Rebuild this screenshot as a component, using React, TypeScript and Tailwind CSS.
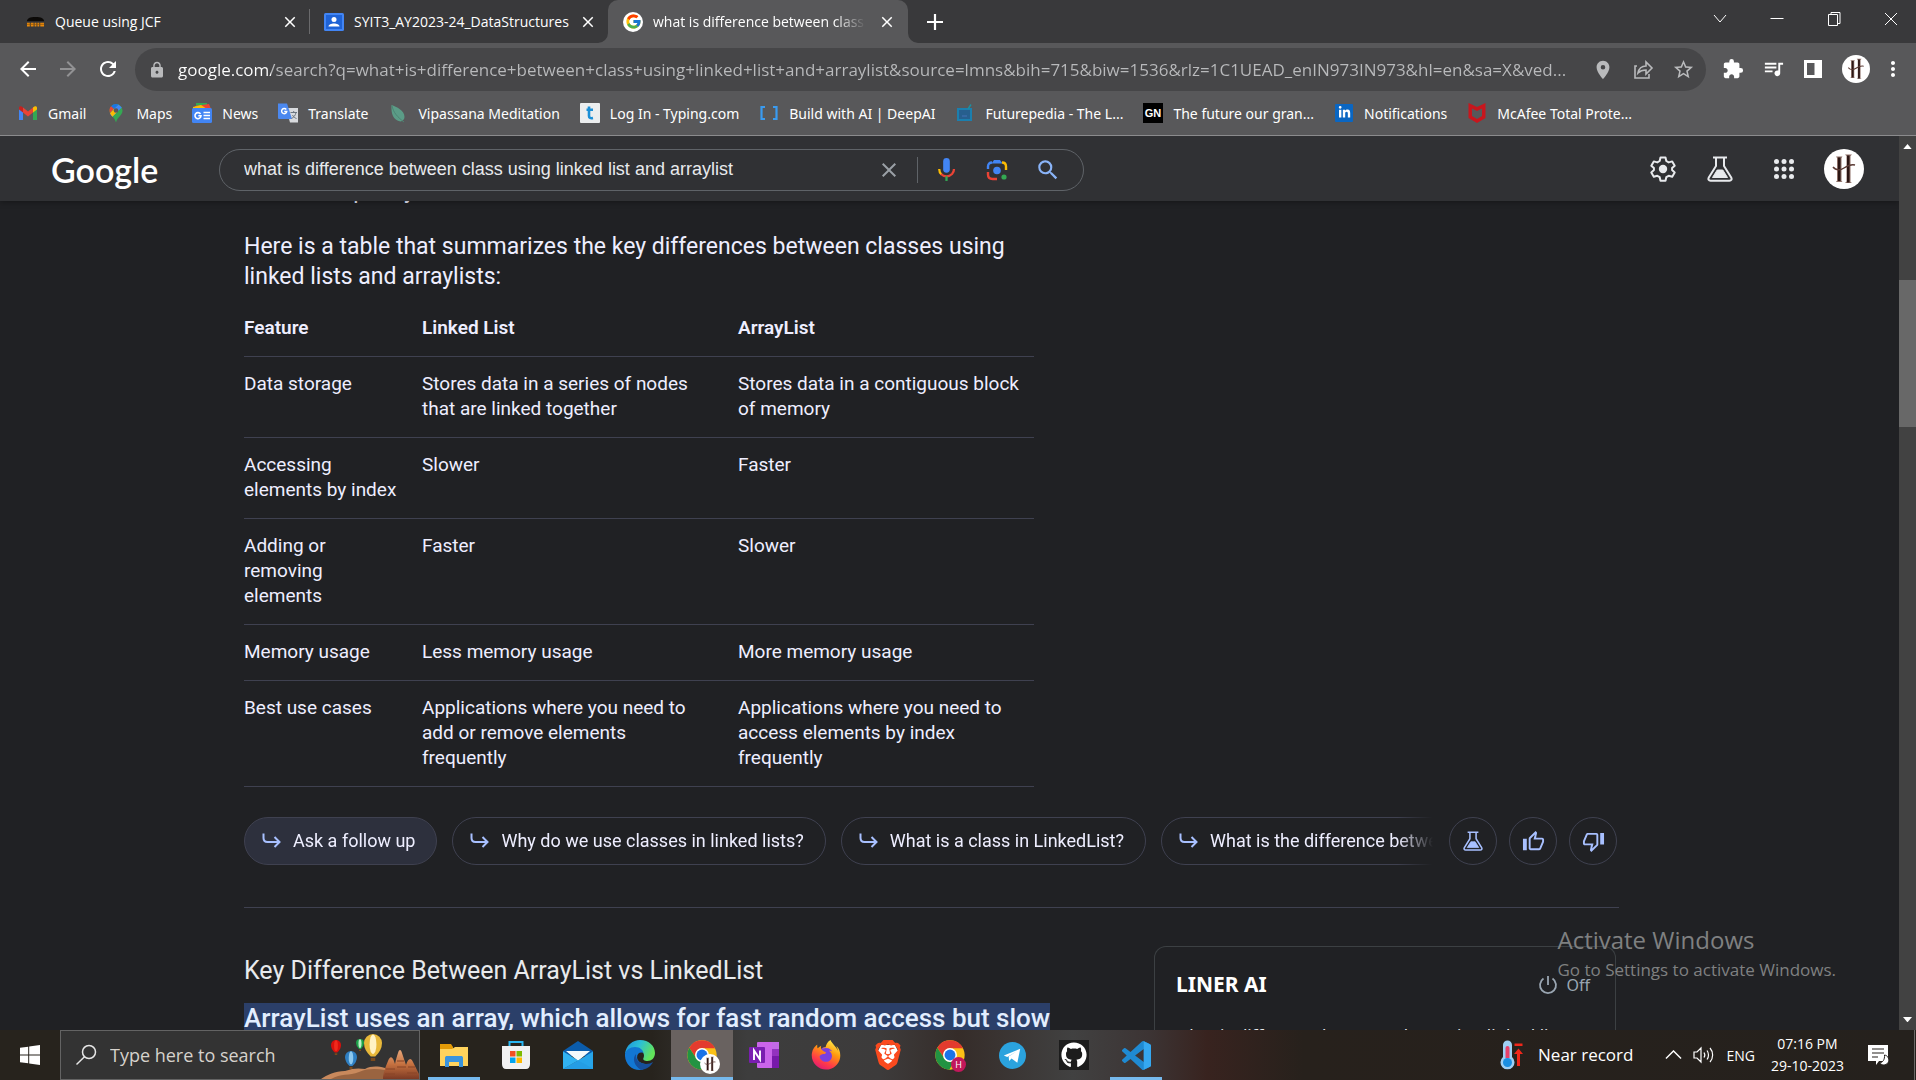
import React, { ReactNode } from "react";
import { FcGoogle } from "react-icons/fc";
import { FaFirefoxBrowser, FaGithub, FaLinkedinIn } from "react-icons/fa";
import { SiBrave } from "react-icons/si";
import {
  MdArrowBack,
  MdArrowForward,
  MdClose,
  MdExtension,
  MdLocationOn,
  MdLock,
  MdMoreVert,
  MdOutlineThumbDown,
  MdOutlineThumbUp,
  MdQueueMusic,
  MdRefresh,
  MdSearch,
  MdStarBorder,
} from "react-icons/md";

/* ---------- shared drawings ---------- */

function Avatar({ className }: { className: string }) {
  return (
    <svg viewBox="0 0 40 40" className={className} aria-hidden="true">
      <circle cx="20" cy="20" r="20" fill="#fff" />
      <path d="M12 7.500h6.500l-1 1.500v23l1 1H12l1-1.500V9z" fill="#8d7068" />
      <path d="M14 8.500h2.500v23.500H14z" fill="#2b1614" />
      <path d="M21 5.500h7l-1.500 1.500v26l1.500 1h-7l1.500-1.500V7z" fill="#8d7068" />
      <path d="M23 6.500h2.500v27H23z" fill="#2b1614" />
      <path d="M9 18c3 4 8 3 11 1s7-4 11-3" fill="none" stroke="#5a3a34" strokeWidth="1.500" />
    </svg>
  );
}

function Flask({ className }: { className: string }) {
  return (
    <svg viewBox="0 0 26 26" className={className} fill="none" stroke="currentColor" strokeWidth="2" aria-hidden="true">
      <path d="M6 1.500h14M9 1.500v8.500L1.800 21.500c-1 1.800 0 3.300 1.700 3.300h19c1.700 0 2.700-1.500 1.700-3.300L17 10V1.500" />
      <path d="M10.200 14h5.600l4.700 7.500h-15z" fill="currentColor" strokeWidth="1" />
    </svg>
  );
}

function Chrome({ className }: { className: string }) {
  return (
    <svg viewBox="0 0 24 24" className={className} aria-hidden="true">
      <circle cx="12" cy="12" r="11" fill="#fbc116" />
      <path d="M2.470 6.500A11 11 0 0 1 21.800 7H12a5 5 0 0 0-4.330 7.500Z" fill="#e33b2e" />
      <path d="M2.470 6.500A11 11 0 0 0 11.500 23L16.330 14.500a5 5 0 0 1-8.660 0Z" fill="#229342" />
      <circle cx="12" cy="12" r="5.200" fill="#fff" />
      <circle cx="12" cy="12" r="4.100" fill="#1a73e8" />
    </svg>
  );
}

/* ---------- browser tabs ---------- */

function TabFlare({ side }: { side: "left" | "right" }) {
  return (
    <svg
      viewBox="0 0 10 10"
      className={
        side === "left"
          ? "absolute -left-[10px] bottom-0 h-[10px] w-[10px] text-[#58585a]"
          : "absolute -right-[10px] bottom-0 h-[10px] w-[10px] text-[#58585a]"
      }
      fill="currentColor"
      aria-hidden="true"
    >
      <path d={side === "left" ? "M10 0v10H0A10 10 0 0 0 10 0Z" : "M0 0v10h10A10 10 0 0 1 0 0Z"} />
    </svg>
  );
}

function TabStrip() {
  return (
    <div className="flex h-[43px] shrink-0 items-center bg-[#39393b] text-[14px]">
      <div className="flex w-[309px] items-center pl-[26px] pr-[10px]">
        <svg viewBox="0 0 20 12" className="w-[19px] shrink-0" aria-hidden="true">
          <path d="M1 5.500c0-3 3-4.500 9-4.500s9 1.500 9 4.500z" fill="#0c0a08" />
          <path d="M1 7h3v4H1zm4 0h3v4H5zm4 0h2v4H9zm3 0h2v4h-2zm3 0h4v4h-4z" fill="#e8890c" />
          <path d="M1 8.800h18" stroke="#8a5206" strokeWidth=".7" />
        </svg>
        <span className="ml-[10px] flex-1 truncate">Queue using JCF</span>
        <button aria-label="Close tab"><MdClose className="size-[18px]" /></button>
      </div>
      <div className="h-[25px] w-px bg-[#6a6a6c]" />
      <div className="flex w-[298px] items-center pl-[14px] pr-[11px]">
        <svg viewBox="0 0 20 20" className="size-5 shrink-0" aria-hidden="true">
          <rect y="1" width="20" height="18" rx="1.500" fill="#4285f4" />
          <rect x="2" y="3" width="16" height="14" fill="#1f63d6" />
          <circle cx="10" cy="7.500" r="2.500" fill="#fff" />
          <path d="M4.500 14.500c0-4 11-4 11 0z" fill="#fff" />
        </svg>
        <span className="ml-[10px] flex-1 truncate">SYIT3_AY2023-24_DataStructures</span>
        <button aria-label="Close tab"><MdClose className="size-[18px]" /></button>
      </div>
      <div className="relative flex h-full w-[300px] items-center rounded-t-[10px] bg-[#58585a] pl-[15px] pr-[12px]">
        <TabFlare side="left" />
        <TabFlare side="right" />
        <span className="flex size-5 shrink-0 items-center justify-center rounded-full bg-white">
          <FcGoogle className="size-[17px]" />
        </span>
        <span className="ml-[10px] mr-[12px] flex-1 overflow-hidden whitespace-nowrap [mask-image:linear-gradient(90deg,#000_85%,transparent)]">
          what is difference between class
        </span>
        <button aria-label="Close tab"><MdClose className="size-[18px]" /></button>
      </div>
      <button aria-label="New tab" className="ml-[18px]">
        <svg viewBox="0 0 18 18" className="size-[18px]" stroke="#fff" strokeWidth="2.200" aria-hidden="true">
          <path d="M9 1v16M1 9h16" />
        </svg>
      </button>
      <div className="-mr-[3px] ml-auto flex h-[37px] items-center self-start text-white">
        {[
          ["Search tabs", "M4 6l6 7 6-7"],
          ["Minimize", "M3.500 9.500h13"],
          ["Restore", "M4.500 5.500h9v11h-9zM7 5.500v-2h9v11h-2.500"],
          ["Close", "M4 4l12 12M16 4L4 16"],
        ].map(([label, d]) => (
          <button key={label} aria-label={label} className="flex w-[57px] items-center justify-center">
            <svg viewBox="0 0 20 20" className="size-5" fill="none" stroke="currentColor" aria-hidden="true">
              <path d={d} />
            </svg>
          </button>
        ))}
      </div>
    </div>
  );
}

/* ---------- address bar ---------- */

function Toolbar() {
  return (
    <div className="flex shrink-0 items-center bg-[#58585a] pt-[5px]">
      <div className="flex w-[135px] items-center gap-4 pl-4 pb-[2px]">
        <button aria-label="Back"><MdArrowBack className="size-6" /></button>
        <button aria-label="Forward" className="text-[#929294]"><MdArrowForward className="size-6" /></button>
        <button aria-label="Reload"><MdRefresh className="size-6" /></button>
      </div>
      <div className="flex h-[43px] flex-1 items-center rounded-full bg-[#464648] pl-[13px] pr-[11px] text-[#b9babc]">
        <MdLock className="size-[18px] shrink-0" />
        <input
          aria-label="Address"
          className="ml-[12px] min-w-0 flex-1 bg-[linear-gradient(90deg,#fff_93px,#b9babc_93px)] bg-clip-text text-[17px] text-transparent outline-none"
          defaultValue="google.com/search?q=what+is+difference+between+class+using+linked+list+and+arraylist&source=lmns&bih=715&biw=1536&rlz=1C1UEAD_enIN973IN973&hl=en&sa=X&ved..."
        />
        <div className="ml-3 flex items-center gap-[18px]">
          <button aria-label="Location"><MdLocationOn className="size-[22px]" /></button>
          <button aria-label="Share">
            <svg viewBox="0 0 22 22" className="size-[22px]" fill="none" stroke="currentColor" strokeWidth="1.600" aria-hidden="true">
              <path d="M5 7H3v12h14v-4" />
              <path d="M6 14c1-5 4-7 8-7V3l6 6-6 6v-4c-4 0-6 1-8 3z" />
            </svg>
          </button>
          <button aria-label="Bookmark"><MdStarBorder className="size-[23px]" /></button>
        </div>
      </div>
      <div className="flex items-center pl-4 pr-[11px] pb-[2px]">
        <button aria-label="Extensions" className="w-10"><MdExtension className="size-[22px]" /></button>
        <button aria-label="Media" className="w-10"><MdQueueMusic className="size-[23px]" /></button>
        <button aria-label="Side panel" className="w-10">
          <svg viewBox="0 0 22 22" className="size-[22px]" aria-hidden="true">
            <path d="M2 2h18v18H2zM5 5v12h7.500V5z" fill="#fff" fillRule="evenodd" />
          </svg>
        </button>
        <button aria-label="Profile" className="w-[39px]"><Avatar className="size-7" /></button>
        <button aria-label="Menu"><MdMoreVert className="size-6" /></button>
      </div>
    </div>
  );
}

/* ---------- bookmarks ---------- */

const bookmarks: { label: string; icon: ReactNode }[] = [
  {
    label: "Gmail",
    icon: (
      <>
        <path d="M1 5v12h4V8z" fill="#4285f4" />
        <path d="M19 5v12h-4V8z" fill="#34a853" />
        <path d="M5 4.500l5 4 5-4v5l-5 4-5-4z" fill="#ea4335" />
        <path d="M1 5c0-2 2-2.500 4-.500v5L1 6.500z" fill="#c5221f" />
        <path d="M19 5c0-2-2-2.500-4-.500v5l4-3z" fill="#fbbc04" />
      </>
    ),
  },
  {
    label: "Maps",
    icon: (
      <>
        <path d="M10 1a6.500 6.500 0 0 0-6.500 6.500c0 5 4.500 5.500 6.500 12 2-6.500 6.500-7 6.500-12A6.500 6.500 0 0 0 10 1z" fill="#34a853" />
        <path d="M10 1a6.500 6.500 0 0 0-5 2.300L8 6l4.500-4.500A7 7 0 0 0 10 1z" fill="#1a73e8" />
        <path d="M5 3.300A6.500 6.500 0 0 0 4 10l4-4z" fill="#ea4335" />
        <path d="M4 10.500c.6 1.200 1.500 2.200 2.400 3.300L15.800 4.500 12.500 1.500 8 6z" fill="#4285f4" />
        <path d="M4 10.300c.6 1.200 1.500 2.200 2.400 3.500L12 8l-4-2z" fill="#fbbc04" />
        <circle cx="10" cy="7.500" r="2.300" fill="#58585a" />
      </>
    ),
  },
  {
    label: "News",
    icon: (
      <>
        <path d="M4 0h11v8H4z" fill="#34a853" />
        <path d="M3 3l14-2 2 5H3z" fill="#ea4335" />
        <path d="M1 4l8-2 6 4H1z" fill="#fbbc04" />
        <rect y="5" width="20" height="15" rx="1.500" fill="#4285f4" />
        <path d="M8.500 11A3 3 0 1 0 9 12.800H6.300M11.500 9.500H18M11.500 12.500H18M11.500 15.500H18" fill="none" stroke="#fff" strokeWidth="1.600" />
      </>
    ),
  },
  {
    label: "Translate",
    icon: (
      <>
        <path d="M8 5h12v14.500H12z" fill="#d8dade" />
        <path d="M0 .5h9L14 16H1.500C.5 16 0 15.500 0 14.500z" fill="#4b88ef" />
        <path d="M8.300 6.500A2.600 2.600 0 1 0 8.800 8.500H6.200" fill="none" stroke="#fff" strokeWidth="1.400" />
        <path d="M12.500 9.500H19M15.700 8v1.500M18 9.500c-.5 3-2.500 5-4.500 6M14.500 12c1 2 2.500 3 4 3.500" fill="none" stroke="#6b7580" />
      </>
    ),
  },
  {
    label: "Vipassana Meditation",
    icon: (
      <>
        <path d="M3.500 2c5 2 13 5 13 12 0 2.500-2 4-4 4.500C5 17 3 11 3.500 2z" fill="#5b9c87" />
        <path d="M4 2.500c1 7 6 12 12 16.500" fill="none" stroke="#4c8573" strokeWidth="1" />
      </>
    ),
  },
  {
    label: "Log In - Typing.com",
    icon: (
      <>
        <rect width="20" height="20" rx="1" fill="#eceeef" />
        <path d="M9 3.500v9.500c0 2 1.500 2.500 4 2M6.500 6.800h6.500" fill="none" stroke="#1b8fd6" strokeWidth="2.600" />
      </>
    ),
  },
  {
    label: "Build with AI | DeepAI",
    icon: (
      <path d="M6 4H2.500v12H6M14 4h3.500v12H14" fill="none" stroke="#3a9bf0" strokeWidth="2.200" />
    ),
  },
  {
    label: "Futurepedia - The L...",
    icon: (
      <>
        <path d="M3 6h13v11H3z" fill="#275f8e" stroke="#1b7fae" strokeWidth="2" />
        <path d="M13 6l3-4.500" stroke="#1c8f9f" strokeWidth="1.500" />
        <path d="M7 13h5" stroke="#3b6ba8" strokeWidth="1.500" />
      </>
    ),
  },
  {
    label: "The future our gran...",
    icon: (
      <>
        <rect width="20" height="20" fill="#000" />
        <text x="10" y="14" fontSize="11" fontWeight="700" fill="#fff" textAnchor="middle" fontFamily="Liberation Sans, sans-serif">
          GN
        </text>
      </>
    ),
  },
  {
    label: "Notifications",
    icon: (
      <>
        <rect x="1" y="1" width="18" height="18" rx="1" fill="#0a66c2" />
        <FaLinkedinIn x="4" y="3" size={13} color="#fff" />
      </>
    ),
  },
  {
    label: "McAfee Total Prote...",
    icon: (
      <path d="M1.500 0L10 4l8.500-4v15L10 20l-8.500-5zM5 5.500v7.500l5 3 5-3V5.500L10 8z" fill="#c8161d" fillRule="evenodd" />
    ),
  },
];

function BookmarksBar() {
  return (
    <nav
      aria-label="Bookmarks"
      className="flex h-[45px] shrink-0 items-center gap-5 border-b border-[#8b8b8d] bg-[#58585a] pl-[18px] font-['Noto_Sans','Open_Sans',sans-serif]"
    >
      {bookmarks.map((b) => (
        <a key={b.label} href="#" className="flex items-center gap-[10px] whitespace-nowrap text-[14px]">
          <svg viewBox="0 0 20 20" className="size-5" aria-hidden="true">{b.icon}</svg>
          {b.label}
        </a>
      ))}
    </nav>
  );
}

/* ---------- search page ---------- */

function SearchHeader() {
  return (
    <header className="relative z-10 flex h-[65px] shrink-0 items-center bg-[#303134] pt-[2px] pr-[35px] shadow-[0_1px_6px_rgba(0,0,0,0.35)]">
      <a href="#" className="w-[219px] pl-[51px] font-['Lato',sans-serif] text-[34px] leading-[42px] font-semibold text-white">
        Google
      </a>
      <div className="flex h-[42px] w-[865px] items-center rounded-full border border-[#5f6368] pl-6 pr-[22px]">
        <input
          aria-label="Search"
          className="min-w-0 flex-1 font-['Liberation_Sans',Arial,sans-serif] text-[18px] text-[#e8eaed] outline-none"
          defaultValue="what is difference between class using linked list and arraylist"
        />
        <button aria-label="Clear" className="text-[#9aa0a6]"><MdClose className="size-6" /></button>
        <div className="mx-4 h-[26px] w-px bg-[#5f6368]" />
        <div className="flex items-center gap-[26px]">
          <button aria-label="Search by voice">
            <svg viewBox="0 0 24 24" className="size-[25px]" fill="none" aria-hidden="true">
              <rect x="8.800" y="1" width="6.400" height="14" rx="3.200" fill="#4285f4" />
              <path d="M5 11.500c0 2.200.8 4 2.200 5.200" stroke="#fbbc04" strokeWidth="2.200" />
              <path d="M6.700 16.300c3 3 7.600 3 10.600 0a7 7 0 0 0 1.900-4.800" stroke="#ea4335" strokeWidth="2.200" />
              <path d="M12 18.500V23" stroke="#34a853" strokeWidth="2.200" />
            </svg>
          </button>
          <button aria-label="Search by image">
            <svg viewBox="0 0 24 24" className="size-6" fill="none" strokeWidth="2.400" aria-hidden="true">
              <path d="M3 11V8.500C3 6 4.500 4.500 7 4.500" stroke="#4285f4" />
              <path d="M6.500 5.500L9 2h6l2.500 3.500z" fill="#4285f4" />
              <path d="M17 4.500c2.500 0 4 1.500 4 4V12" stroke="#fbbc04" />
              <path d="M3 14v2.500C3 19.500 4.500 21 7.500 21H12" stroke="#ea4335" />
              <circle cx="12" cy="12.500" r="3.800" fill="#4285f4" />
              <circle cx="19" cy="19" r="2.600" fill="#34a853" />
            </svg>
          </button>
          <button aria-label="Search" className="text-[#8ab4f8]"><MdSearch className="size-[26px]" /></button>
        </div>
      </div>
      <div className="ml-auto flex items-center pb-[2px] text-[#e8eaed]">
        <button aria-label="Settings" className="mr-[31px]">
          <svg viewBox="0 0 26 26" className="size-[26px]" fill="none" stroke="currentColor" strokeWidth="2" strokeLinejoin="round" aria-hidden="true">
            <path d="M10.500 1.500h5l.8 3.500 2.400 1.400 3.500-1 2.500 4.300-2.600 2.400v2l2.600 2.400-2.500 4.300-3.500-1-2.400 1.400-.8 3.500h-5l-.8-3.500-2.400-1.400-3.500 1-2.500-4.300 2.600-2.400v-2L1.300 9.700l2.500-4.300 3.500 1L9.700 5z" />
            <circle cx="13" cy="13" r="4.200" fill="currentColor" stroke="none" />
          </svg>
        </button>
        <button aria-label="Labs" className="mr-[41px]"><Flask className="size-[26px]" /></button>
        <button aria-label="Apps" className="mr-[30px]">
          <svg viewBox="0 0 20 20" className="size-5" fill="currentColor" aria-hidden="true">
            {[2.5, 10, 17.5].map((y) =>
              [2.5, 10, 17.5].map((x) => <circle key={x + "-" + y} cx={x} cy={y} r="2.500" />)
            )}
          </svg>
        </button>
        <button aria-label="Account"><Avatar className="size-10" /></button>
      </div>
    </header>
  );
}

const rows = [
  ["Data storage", "Stores data in a series of nodes that are linked together", "Stores data in a contiguous block of memory"],
  ["Accessing elements by index", "Slower", "Faster"],
  ["Adding or removing elements", "Faster", "Slower"],
  ["Memory usage", "Less memory usage", "More memory usage"],
  [
    "Best use cases",
    "Applications where you need to add or remove elements frequently",
    "Applications where you need to access elements by index frequently",
  ],
];

function ComparisonTable() {
  return (
    <table className="mt-[9px] w-[790px] table-fixed text-left align-top text-[19px] leading-[25px]">
      <colgroup>
        <col className="w-[178px]" />
        <col className="w-[316px]" />
        <col />
      </colgroup>
      <thead>
        <tr className="border-b border-[#3f4150]">
          {["Feature", "Linked List", "ArrayList"].map((h) => (
            <th key={h} scope="col" className="pt-[14px] pr-6 pb-4 font-semibold">{h}</th>
          ))}
        </tr>
      </thead>
      <tbody>
        {rows.map((r) => (
          <tr key={r[0]} className="border-b border-[#3f4150]">
            <td className="pt-[14px] pr-6 pb-4 align-top">{r[0]}</td>
            <td className="pt-[14px] pr-10 pb-4 align-top">{r[1]}</td>
            <td className="pt-[14px] pr-3 pb-4 align-top">{r[2]}</td>
          </tr>
        ))}
      </tbody>
    </table>
  );
}

function FollowUp({ label, primary }: { label: string; primary?: boolean }) {
  return (
    <button
      className={
        primary
          ? "flex h-12 shrink-0 items-center gap-3 rounded-full border border-[#3f4150] bg-[#2d303d] pb-[2px] pl-4 pr-[21px]"
          : "flex h-12 shrink-0 items-center gap-3 rounded-full border border-[#3f4150] pb-[2px] pl-4 pr-[21px]"
      }
    >
      <svg viewBox="0 0 20 20" className="size-5 text-[#a8c0ff]" fill="none" stroke="currentColor" strokeWidth="2" aria-hidden="true">
        <path d="M2.500 3.500V8c0 2.500 1.500 4 4 4H18M13.500 7l5 5-5 5" />
      </svg>
      {label}
    </button>
  );
}

function FollowUpRow() {
  return (
    <div className="mt-[30px] flex w-[1373px] text-[18px] text-[#eeeeff]">
      <div className="flex min-w-0 flex-1 gap-[15px] overflow-hidden whitespace-nowrap [mask-image:linear-gradient(90deg,#000_97%,transparent)]">
        <FollowUp label="Ask a follow up" primary />
        <FollowUp label="Why do we use classes in linked lists?" />
        <FollowUp label="What is a class in LinkedList?" />
        <FollowUp label="What is the difference between ArrayList and LinkedList?" />
      </div>
      <div className="ml-4 flex gap-3 text-[#a8c0ff]">
        <button aria-label="Labs" className="flex size-12 items-center justify-center rounded-full border border-[#3f4150]">
          <Flask className="size-5" />
        </button>
        <button aria-label="Helpful" className="flex size-12 items-center justify-center rounded-full border border-[#3f4150]">
          <MdOutlineThumbUp className="size-[23px]" />
        </button>
        <button aria-label="Not helpful" className="flex size-12 items-center justify-center rounded-full border border-[#3f4150]">
          <MdOutlineThumbDown className="size-[23px]" />
        </button>
      </div>
    </div>
  );
}

function LinerCard() {
  return (
    <aside className="mt-[38px] w-[462px] rounded-t-xl border border-b-0 border-[#3c4043] px-[21px] pt-6 font-['Noto_Sans','Open_Sans',sans-serif]">
      <div className="flex h-7 items-center">
        <h2 className="flex-1 text-[21px] font-bold text-white">LINER AI</h2>
        <button className="mr-1 flex items-center gap-2 text-[16px] text-[#9aa6b2]">
          <svg viewBox="0 0 20 20" className="size-5" fill="none" stroke="currentColor" strokeWidth="1.800" aria-hidden="true">
            <path d="M10 1v9M5.500 3.500a8 8 0 1 0 9 0" />
          </svg>
          Off
        </button>
      </div>
      <p className="mt-6 text-[17px] leading-6 text-[#e8eaed]">
        what is difference between class using linked list and arraylist
      </p>
    </aside>
  );
}

function Results() {
  return (
    <main className="-mt-[25px] min-w-0 flex-1 overflow-hidden pl-[244px] font-['Roboto',sans-serif] text-[#eeeeff]">
      <ul className="list-disc pl-[26px] text-[23px] leading-[30px]">
        <li>more capacity</li>
      </ul>
      <p className="mt-[26px] w-[790px] text-[23px] leading-[30px]">
        Here is a table that summarizes the key differences between classes using linked lists and arraylists:
      </p>
      <ComparisonTable />
      <FollowUpRow />
      <hr className="mt-[42px] w-[1375px] border-[#3f4150]" />
      <div className="flex w-[1375px] gap-[102px]">
        <article className="w-[808px] pt-[46px]">
          <h3 className="text-[25px] leading-[34px] text-[#e8eaed]">
            <a href="#">Key Difference Between ArrayList vs LinkedList</a>
          </h3>
          <p className="mt-[14px] text-[26px] leading-8 font-medium whitespace-nowrap text-[#e2eeff]">
            <mark className="bg-[#2b3f69] text-inherit">
              ArrayList uses an array, which allows for fast random access but slow
            </mark>
          </p>
        </article>
        <LinerCard />
      </div>
    </main>
  );
}

function Scrollbar() {
  return (
    <div className="flex w-[17px] shrink-0 flex-col items-center bg-[#424242] py-2">
      <svg viewBox="0 0 10 6" className="w-[9px]" fill="#fff" aria-hidden="true"><path d="M5 0l5 6H0z" /></svg>
      <div className="mt-[131px] h-[147px] w-full bg-[#686868]" />
      <svg viewBox="0 0 10 6" className="mt-auto w-[9px]" fill="#fff" aria-hidden="true"><path d="M0 0h10L5 6z" /></svg>
    </div>
  );
}

/* ---------- taskbar ---------- */

const apps: { name: string; active?: boolean; open?: boolean; icon: ReactNode }[] = [
  {
    name: "File Explorer",
    open: true,
    icon: (
      <svg viewBox="0 0 30 30" className="size-[30px]" aria-hidden="true">
        <path d="M1 4h11l2 3v5H1z" fill="#e39a07" />
        <path d="M1 9h12l3-2h13v19H1z" fill="#ffd35c" />
        <path d="M6 27V18c0-1.500 1-2 2-2h14c1 0 2 .5 2 2v9h-4v-5H10v5z" fill="#3a94dd" />
      </svg>
    ),
  },
  {
    name: "Microsoft Store",
    icon: (
      <svg viewBox="0 0 30 30" className="size-[30px]" aria-hidden="true">
        <path d="M8.500 6V2h13v4" fill="none" stroke="#29b6f2" strokeWidth="2" />
        <path d="M1 6h28v18c0 3-1.500 5-4 5H5c-2.500 0-4-2-4-5z" fill="#f1f1f1" />
        <path d="M9 11h5.500v5.500H9z" fill="#f25022" />
        <path d="M15.500 11H21v5.500h-5.500z" fill="#7fba00" />
        <path d="M9 17.500h5.500V23H9z" fill="#00a4ef" />
        <path d="M15.500 17.500H21V23h-5.500z" fill="#ffb900" />
      </svg>
    ),
  },
  {
    name: "Mail",
    icon: (
      <svg viewBox="0 0 30 30" className="size-[30px]" aria-hidden="true">
        <path d="M0 11L15 1l15 10v5H0z" fill="#0b5cab" />
        <path d="M3 11h24L15 21z" fill="#f5f9fc" />
        <path d="M0 11.500l15 9L0 29z" fill="#2fb1f0" />
        <path d="M30 11.500V29H15V20.500z" fill="#27a5ea" />
        <path d="M0 29l15-8.500L30 29z" fill="#1587d6" />
        <path d="M0 11.500L30 29H0z" fill="#33b4f2" opacity=".5" />
      </svg>
    ),
  },
  {
    name: "Edge",
    icon: (
      <svg viewBox="0 0 30 30" className="size-[30px]" aria-hidden="true">
        <defs>
          <linearGradient id="edge-top" x1="0" x2="1" y1="0" y2=".4">
            <stop offset="0" stopColor="#1a8fe0" />
            <stop offset=".5" stopColor="#2cc0d5" />
            <stop offset="1" stopColor="#62e35a" />
          </linearGradient>
        </defs>
        <path d="M0 14C1 5 8 0 15 0c9 0 15 6 15 13 0 5-3.500 8-7.500 8-3 0-5-1.300-4-3 1.500-3 0-8-6-8C7 10 1 12 0 14z" fill="url(#edge-top)" />
        <path d="M0 14c1-4 5-7 10-7 5 0 8 3 8.500 6-8-3-11 12 6 11-3 4-6.500 6-10 6C6 30-.5 23 0 14z" fill="#1277d3" />
        <path d="M11 14c-4 4-2 12 5 15.900C22 29.500 26 26 28 22c-6 4-18 2-17-8z" fill="#164f9b" />
      </svg>
    ),
  },
  {
    name: "Chrome",
    active: true,
    icon: (
      <span className="relative">
        <Chrome className="size-8" />
        <Avatar className="absolute -right-[2px] -bottom-[3px] size-[20px]" />
      </span>
    ),
  },
  {
    name: "OneNote",
    icon: (
      <svg viewBox="0 0 30 30" className="size-[30px]" aria-hidden="true">
        <rect x="8" y="2" width="22" height="26" rx="1" fill="#ca64ea" />
        <path d="M23 2h7v7h-7z" fill="#c26ae6" />
        <path d="M23 9h7v7h-7z" fill="#9332bf" />
        <path d="M23 16h7v12h-7z" fill="#7719aa" />
        <rect y="7" width="16" height="16" rx="1" fill="#7a1eb0" />
        <path d="M5 20v-9.500l6 9V10.500" fill="none" stroke="#fff" strokeWidth="1.900" />
      </svg>
    ),
  },
  {
    name: "Firefox",
    icon: (
      <svg viewBox="0 0 30 30" className="size-[30px]" aria-hidden="true">
        <defs>
          <linearGradient id="fox" x1=".8" x2=".3" y1="0" y2="1">
            <stop offset="0" stopColor="#fff44f" />
            <stop offset=".4" stopColor="#ff980e" />
            <stop offset=".75" stopColor="#ff3b48" />
            <stop offset="1" stopColor="#e01b73" />
          </linearGradient>
        </defs>
        <circle cx="15" cy="15" r="8" fill="#7a3fe0" />
        <FaFirefoxBrowser size={30} fill="url(#fox)" />
      </svg>
    ),
  },
  {
    name: "Brave",
    icon: (
      <svg viewBox="0 0 30 30" className="size-[30px]" aria-hidden="true">
        <path d="M8 5h14l3 6-3 12-7 5-7-5L5 11z" fill="#fff" />
        <SiBrave size={30} color="#fb4a1e" />
      </svg>
    ),
  },
  {
    name: "Chrome profile H",
    icon: (
      <span className="relative">
        <Chrome className="size-8" />
        <span className="absolute right-0 -bottom-px flex size-[15px] items-center justify-center rounded-full bg-[#c2185b] text-[9px] leading-none">
          H
        </span>
      </span>
    ),
  },
  {
    name: "Telegram",
    icon: (
      <svg viewBox="0 0 28 28" className="size-[27px]" aria-hidden="true">
        <circle cx="14" cy="14" r="14" fill="#2ba3de" />
        <path d="M5 14L22 7l-3 14.500-6-4.300-2.500 2.600-.5-4.800L18.500 9.500 8.500 15.500z" fill="#fff" />
      </svg>
    ),
  },
  {
    name: "GitHub Desktop",
    icon: (
      <span className="flex size-[30px] items-center justify-center bg-[#1c1c1c]">
        <FaGithub className="size-[26px]" />
      </span>
    ),
  },
  {
    name: "Visual Studio Code",
    open: true,
    icon: (
      <svg viewBox="0 0 24 24" className="size-[29px]" aria-hidden="true">
        <path
          d="M23.150 2.587L18.210.210a1.494 1.494 0 0 0-1.705.290l-9.460 8.630-4.120-3.128a.999.999 0 0 0-1.276.057L.327 7.261A1 1 0 0 0 .326 8.740L3.899 12 .326 15.260a1 1 0 0 0 .001 1.479L1.650 17.940a.999.999 0 0 0 1.276.057l4.120-3.128 9.460 8.630a1.492 1.492 0 0 0 1.704.290l4.942-2.377A1.500 1.500 0 0 0 24 20.060V3.939a1.500 1.500 0 0 0-.850-1.352zm-5.146 14.861L10.826 12l7.178-5.448v10.896z"
          fill="#1f8ad2"
        />
        <path d="M18 .2l5.200 2.400c.5.300.8.800.8 1.400v16c0 .6-.3 1.100-.8 1.400L18 23.800z" fill="#35a8f0" />
      </svg>
    ),
  },
];

function Balloon({ x, y, r, color, stripe }: { x: number; y: number; r: number; color: string; stripe: string }) {
  return (
    <g>
      <path d={`M${x - r} ${y}a${r} ${r} 0 0 1 ${2 * r} 0q0 ${r * 0.8} ${-r * 0.75} ${r * 1.5}h${-r * 0.5}q${-r * 0.75} ${-r * 0.7} ${-r * 0.75} ${-r * 1.5}z`} fill={color} />
      <ellipse cx={x} cy={y + r * 0.15} rx={r * 0.38} ry={r * 1.1} fill={stripe} />
      <rect x={x - r * 0.25} y={y + r * 1.65} width={r * 0.5} height={r * 0.35} fill="#7a4a1c" />
    </g>
  );
}

function Taskbar() {
  return (
    <footer className="flex h-[50px] shrink-0 items-center bg-[linear-gradient(90deg,#27231d_0%,#27231d_34%,#3d3d3d_39%,#3d3b3b_46%,#352c29_50%,#414141_56%,#3c3434_60%,#38231f_63%,#27211c_68%,#25211d_100%)] text-white">
      <button aria-label="Start" className="flex w-[60px] items-center justify-center">
        <svg viewBox="0 0 20 20" className="size-5" fill="#fff" aria-hidden="true">
          <path d="M0 2.800L8.200 1.700v7.800H0zM9.200 1.500L20 0v9.500H9.200zM0 10.500h8.200v7.800L0 17.200zM9.200 10.500H20V20L9.200 18.500z" />
        </svg>
      </button>
      <div className="flex h-full w-[360px] items-center border border-[#636363] bg-[#333333] pl-[14px]">
        <svg viewBox="0 0 22 22" className="size-[22px] shrink-0" fill="none" stroke="#e6e6e6" strokeWidth="1.500" aria-hidden="true">
          <circle cx="14" cy="8" r="6.500" />
          <path d="M9.500 12.800L1.500 20.500" />
        </svg>
        <input
          aria-label="Type here to search"
          placeholder="Type here to search"
          className="ml-[13px] w-[200px] text-[18px] outline-none placeholder:text-[#d6d2cc]"
        />
        <svg viewBox="0 0 100 48" className="ml-auto h-12 w-[100px] shrink-0" aria-hidden="true">
          <defs>
            <linearGradient id="rock" x1="0" x2="0" y1="0" y2="1">
              <stop offset="0" stopColor="#e8a679" />
              <stop offset=".5" stopColor="#c4703f" />
              <stop offset="1" stopColor="#7c3a24" />
            </linearGradient>
          </defs>
          <Balloon x={17} y={14} r={5} color="#d8100c" stripe="#f02a1c" />
          <Balloon x={41} y={12} r={4} color="#1da24a" stripe="#bdf0c8" />
          <Balloon x={32} y={26} r={6} color="#2f7fc2" stripe="#8cc8ee" />
          <Balloon x={54} y={12} r={9} color="#e8b83a" stripe="#fff2c4" />
          <path d="M2 48c6-4 14-8 24-8 8-3 14-3 20-2 6-3 12-3 20-1v11z" fill="#c9895c" />
          <path d="M12 48c10-6 18-3 28-7s18-3 26-2v9z" fill="#9a6440" />
          <path d="M64 48c0-6 3-13 5-18 2-5 4-5 6 0l1 3c1-5 2-8 3-11 1-4 3-4 4 0l4 12c2-7 5-8 7-3l6 12v5z" fill="url(#rock)" />
          <path d="M67 38h9M78 30h7M78 36h9M89 36h7M66 43h10M88 42h10" stroke="#8b4527" strokeWidth="1.300" opacity=".7" />
        </svg>
      </div>
      <div className="ml-[3px] flex h-full">
        {apps.map((a) => (
          <button
            key={a.name}
            aria-label={a.name}
            className={
              a.active
                ? "relative flex w-[62px] items-center justify-center bg-[#696260]"
                : "relative flex w-[62px] items-center justify-center"
            }
          >
            {a.icon}
            {a.active && <span className="absolute inset-x-0 bottom-0 h-[3px] bg-[#76b9ed]" />}
            {a.open && <span className="absolute inset-x-[5px] bottom-0 h-[3px] bg-[#76b9ed]" />}
          </button>
        ))}
      </div>
      <div className="ml-auto flex h-full items-center">
        <button className="flex items-center gap-[14px] text-[17px]">
          <svg viewBox="0 0 24 30" className="h-[30px] w-6" aria-hidden="true">
            <path d="M3 5a4.500 4.500 0 0 1 9 0v12a7 7 0 1 1-9 0z" fill="#9fd0f5" />
            <path d="M5.500 8a2 2 0 0 1 4 0v10h-4z" fill="#e8406a" />
            <circle cx="7.500" cy="22.500" r="4.500" fill="#1a8fe3" />
            <path d="M14.500 3.500h8v2.500h-8zM17 26V14h-3l4.500-5.500L23 14h-3v12z" fill="#f0271a" />
          </svg>
          Near record
        </button>
        <div className="ml-8 flex items-center gap-[11px]">
          <button aria-label="Show hidden icons">
            <svg viewBox="0 0 18 10" className="w-[17px]" fill="none" stroke="#fff" strokeWidth="1.500" aria-hidden="true">
              <path d="M1 9l8-8 8 8" />
            </svg>
          </button>
          <button aria-label="Volume">
            <svg viewBox="0 0 22 18" className="w-[22px]" fill="none" stroke="#fff" strokeWidth="1.200" aria-hidden="true">
              <path d="M1 6h3l4-4v14l-4-4H1zM11 6.500c1 1.500 1 3.500 0 5M14 4.500c2 2.500 2 6.500 0 9M17 2c3.500 4 3.500 10 0 14" />
            </svg>
          </button>
          <span className="text-[14px]">ENG</span>
        </div>
        <div className="ml-[16px] text-center text-[14px] leading-[22px]">
          <div>07:16 PM</div>
          <div>29-10-2023</div>
        </div>
        <button aria-label="Notifications" className="ml-[23px]">
          <svg viewBox="0 0 22 22" className="size-[22px]" aria-hidden="true">
            <path d="M1 1h20v16h-9l-3 4v-4H1z" fill="#fff" />
            <path d="M5 5h12M5 9h12M5 13h6" stroke="#25211d" strokeWidth="1.200" />
            <path d="M17.500 11a5 5 0 1 1-5 7.500c3 .5 5.500-3 5-7.500z" fill="#fff" stroke="#25211d" />
          </svg>
        </button>
        <div className="ml-[25px] h-full w-px bg-[#6b6967]" />
        <div className="w-px" />
      </div>
    </footer>
  );
}

export default function App() {
  return (
    <div className="flex h-screen flex-col overflow-hidden bg-[#202124] font-['Open_Sans','Noto_Sans',sans-serif] text-white">
      <TabStrip />
      <Toolbar />
      <BookmarksBar />
      <div className="relative flex min-h-0 flex-1">
        <div className="flex min-w-0 flex-1 flex-col overflow-hidden">
          <SearchHeader />
          <Results />
        </div>
        <Scrollbar />
        <div className="pointer-events-none absolute right-[80px] bottom-[47px] text-[#7f8081]">
          <div className="text-[24px] leading-[34px]">Activate Windows</div>
          <div className="text-[17px] leading-[26px]">Go to Settings to activate Windows.</div>
        </div>
      </div>
      <Taskbar />
    </div>
  );
}
